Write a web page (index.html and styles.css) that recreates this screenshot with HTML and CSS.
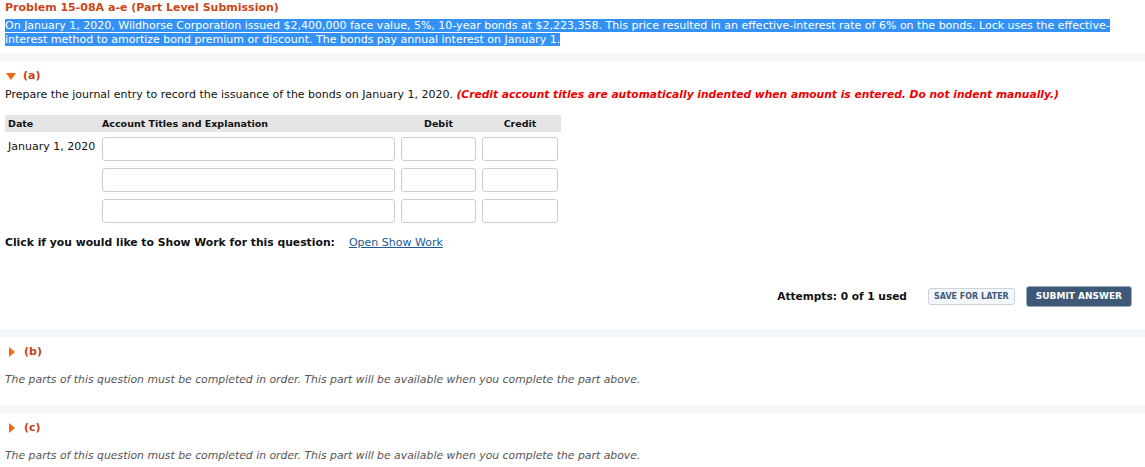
FILE: index.html
```html
<!DOCTYPE html>
<html lang="en">
<head>
<meta charset="utf-8">
<title>Problem 15-08A</title>
<link rel="stylesheet" href="styles.css">
</head>
<body>
<div class="problem">
  <h1 class="title">Problem 15-08A a-e (Part Level Submission)</h1>
  <p class="intro"><span class="sel">On January 1, 2020, Wildhorse Corporation issued $2,400,000 face value, 5%, 10-year bonds at $2,223,358. This price resulted in an effective-interest rate of 6% on the bonds. Lock uses the effective-interest method to amortize bond premium or discount. The bonds pay annual interest on January 1. </span></p>
</div>
<div class="band"></div>
<section class="part">
  <div class="part-head"><span class="tri tri-down"></span><span class="label">(a)</span></div>
  <p class="prompt">Prepare the journal entry to record the issuance of the bonds on January 1, 2020. <em class="note">(Credit account titles are automatically indented when amount is entered. Do not indent manually.)</em></p>
  <div class="journal">
    <div class="jh jh-date">Date</div>
    <div class="jh jh-acct">Account Titles and Explanation</div>
    <div class="jh jh-num">Debit</div>
    <div class="jh jh-num">Credit</div>

    <div class="jc jc-date">January 1, 2020</div>
    <div class="jc"><input class="field" type="text"></div>
    <div class="jc"><input class="field" type="text"></div>
    <div class="jc"><input class="field" type="text"></div>

    <div class="jc jc-date"></div>
    <div class="jc"><input class="field" type="text"></div>
    <div class="jc"><input class="field" type="text"></div>
    <div class="jc"><input class="field" type="text"></div>

    <div class="jc jc-date"></div>
    <div class="jc"><input class="field" type="text"></div>
    <div class="jc"><input class="field" type="text"></div>
    <div class="jc"><input class="field" type="text"></div>
  </div>
  <div class="showwork"><strong class="sw-label">Click if you would like to Show Work for this question:</strong><a class="link" href="#">Open Show Work</a></div>
  <div class="actions">
    <strong class="attempts">Attempts: 0 of 1 used</strong>
    <button class="btn btn-save" type="button">SAVE FOR LATER</button>
    <button class="btn btn-submit" type="button">SUBMIT ANSWER</button>
  </div>
</section>
<div class="band band-b"></div>
<section class="part locked">
  <div class="part-head"><span class="tri tri-right"></span><span class="label">(b)</span></div>
  <p class="locked-msg">The parts of this question must be completed in order. This part will be available when you complete the part above.</p>
</section>
<div class="band band-c"></div>
<section class="part locked">
  <div class="part-head"><span class="tri tri-right"></span><span class="label">(c)</span></div>
  <p class="locked-msg">The parts of this question must be completed in order. This part will be available when you complete the part above.</p>
</section>
</body>
</html>
```
FILE: styles.css
```css
html, body {
  margin: 0;
  padding: 0;
  background: #ffffff;
}
body {
  font-family: "DejaVu Sans", Verdana, sans-serif;
  font-size: 11px;
  line-height: 14px;
  color: #111111;
}
.problem {
  padding: 1px 5px 0;
}
.title {
  margin: 0;
  font-size: 11px;
  line-height: 14px;
  font-weight: bold;
  color: #c6481a;
}
.intro {
  margin: 4px 0 0;
  width: 1125px;
  line-height: 14px;
}
.sel {
  background: #3492f6;
  color: #ffffff;
}
.band {
  height: 8px;
  margin-top: 6px;
  background: #f3f6f9;
}
.band-b {
  margin-top: 23px;
}
.band-c {
  margin-top: 18px;
}
.part {
  padding: 8px 5px 0;
}
.part-head {
  display: flex;
  align-items: center;
  height: 14px;
}
.label {
  font-weight: bold;
  font-size: 11px;
  color: #c63f12;
}
.tri {
  display: inline-block;
  width: 0;
  height: 0;
}
.tri-down {
  margin-left: 1px;
  margin-right: 7px;
  border-left: 5px solid transparent;
  border-right: 5px solid transparent;
  border-top: 7px solid #f4670f;
}
.tri-right {
  margin-left: 4px;
  margin-right: 9px;
  border-top: 5.5px solid transparent;
  border-bottom: 5.5px solid transparent;
  border-left: 6px solid #f4670f;
}
.prompt {
  margin: 5px 0 0;
}
.note {
  color: #ee0000;
  font-weight: bold;
  font-size: 10.7px;
}
.journal {
  margin-top: 13px;
  width: 556px;
  display: grid;
  grid-template-columns: 94px 299px 81px 82px;
}
.jh {
  background: #e5e5e5;
  font-weight: bold;
  font-size: 9.5px;
  height: 17px;
  line-height: 17px;
  padding: 0 3px;
}
.jh-num {
  text-align: center;
}
.jc {
  padding: 5px 3px 2px;
}
.jc-date {
  padding-top: 8px;
}
.field {
  display: block;
  box-sizing: border-box;
  width: 100%;
  height: 24px;
  margin: 0;
  border: 1px solid #cccccc;
  border-radius: 3px;
  background: #ffffff;
  font: inherit;
}
.showwork {
  margin-top: 11px;
  display: flex;
  align-items: center;
  gap: 14px;
}
.sw-label {
  font-size: 10.8px;
}
.link {
  color: #235a93;
  text-decoration: underline;
}
.actions {
  margin-top: 36px;
  display: flex;
  justify-content: flex-end;
  align-items: center;
  padding-right: 8px;
  height: 20px;
}
.attempts {
  font-size: 10.6px;
  margin-right: 21px;
}
.btn {
  font-family: inherit;
  font-weight: bold;
  cursor: pointer;
  margin: 0;
}
.btn-save {
  height: 17px;
  padding: 0 5px;
  font-size: 8px;
  color: #3e5a7a;
  background: #f4f7fa;
  border: 1px solid #c9d3de;
  border-radius: 3px;
  margin-right: 11px;
}
.btn-submit {
  height: 21px;
  padding: 0 9px;
  font-size: 9px;
  color: #ffffff;
  background: #3e5977;
  border: 1px solid #9aa9b9;
  border-radius: 3px;
}
.locked-msg {
  margin: 14px 0 0;
  font-size: 10.85px;
  font-style: italic;
  color: #555555;
}
```
